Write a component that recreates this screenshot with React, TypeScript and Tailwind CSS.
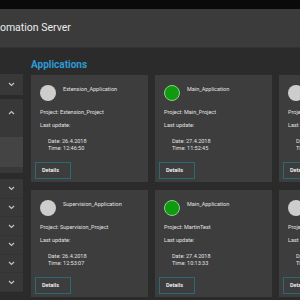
import React from "react";

type App = {
  name: string;
  project: string;
  date: string;
  time: string;
  active: boolean;
};

const rows: App[][] = [
  [
    { name: "Extension_Application", project: "Extension_Project", date: "26.4.2018", time: "12:46:50", active: false },
    { name: "Main_Application", project: "Main_Project", date: "27.4.2018", time: "11:52:45", active: true },
    { name: "Test_Application", project: "Test_Project", date: "26.4.2018", time: "12:40:11", active: false },
  ],
  [
    { name: "Supervision_Application", project: "Supervision_Project", date: "26.4.2018", time: "12:53:07", active: false },
    { name: "Main_Application", project: "MartinTest", date: "27.4.2018", time: "10:13:33", active: true },
    { name: "Demo_Application", project: "Demo_Project", date: "26.4.2018", time: "12:58:21", active: false },
  ],
];

function Chevron({ up = false }: { up?: boolean }) {
  return (
    <svg width="7" height="5" viewBox="0 0 7 5" className="block">
      <path
        d={up ? "M1 4 L3.5 1.5 L6 4" : "M1 1 L3.5 3.5 L6 1"}
        fill="none"
        stroke="#c4c4c4"
        strokeWidth="1.2"
      />
    </svg>
  );
}

function Card({ a }: { a: App }) {
  return (
    <div className="w-[117px] h-[107px] shrink-0 bg-[#3d3d3d] flex flex-col pt-[10px] text-[5.5px] leading-[7px] text-[#e2e2e2]">
      <div className="flex items-start pl-[9px]">
        {a.active ? (
          <div className="w-[16px] h-[16px] rounded-full bg-[#109a10] border border-[#8ccf8c] shrink-0" />
        ) : (
          <div className="w-[16px] h-[16px] rounded-full bg-[#cdcdcd] shrink-0" />
        )}
        <div className="ml-[7px] pt-[1px] whitespace-nowrap">{a.name}</div>
      </div>
      <div className="pl-[9px] mt-[7.5px] whitespace-nowrap">Project: {a.project}</div>
      <div className="pl-[9px] mt-[6px] whitespace-nowrap">Last update:</div>
      <div className="pl-[17px] mt-[9px] whitespace-nowrap">Date: {a.date}</div>
      <div className="pl-[17px] whitespace-nowrap">Time: {a.time}</div>
      <div className="pl-[4px] mt-[10.5px]">
        <div className="w-[36px] h-[17px] border border-[#2b6a73] flex items-center pl-[6px] font-medium text-white whitespace-nowrap">
          Details
        </div>
      </div>
    </div>
  );
}

export default function AppRoot() {
  return (
    <div
      className="w-[300px] h-[300px] overflow-hidden bg-[#2b2b2b] flex flex-col"
      style={{ fontFamily: "Roboto, 'Liberation Sans', sans-serif" }}
    >
      <div className="h-[9px] bg-[#0a0a0a] shrink-0" />
      <div className="h-[39px] bg-[#3b3b3b] shrink-0 flex items-center border-b border-[#333333]">
        <span className="ml-[-16px] text-[10.5px] text-[#ececec] whitespace-nowrap">Automation Server</span>
      </div>
      <div className="flex flex-1">
        <aside className="w-[23px] shrink-0 pt-[26px] flex flex-col gap-[4px]">
          <div className="h-[21px] bg-[#383838] flex items-center justify-end pr-[8px]">
            <Chevron />
          </div>
          <div className="h-[74px] bg-[#383838] flex flex-col">
            <div className="h-[26px] flex items-center justify-end pr-[8px]">
              <Chevron up />
            </div>
            <div className="mt-[12px] h-[30px] bg-[#444444]" />
          </div>
          <div className="mt-[2px] h-[113px] bg-[#383838] flex flex-col pt-[1px]">
            {[0, 1, 2, 3, 4, 5].map((i) => (
              <div key={i} className="h-[19px] flex items-center justify-end pr-[8px] border-b border-[#343434]">
                <Chevron />
              </div>
            ))}
          </div>
        </aside>
        <main className="pl-[8px] pt-[11px] flex flex-col">
          <div className="text-[10px] leading-[12px] font-bold text-[#2d9bd6] whitespace-nowrap">Applications</div>
          <div className="mt-[4px] flex flex-col gap-[8px]">
            {rows.map((r, i) => (
              <div key={i} className="flex gap-[7px]">
                {r.map((a, j) => (
                  <Card key={j} a={a} />
                ))}
              </div>
            ))}
          </div>
        </main>
      </div>
    </div>
  );
}
